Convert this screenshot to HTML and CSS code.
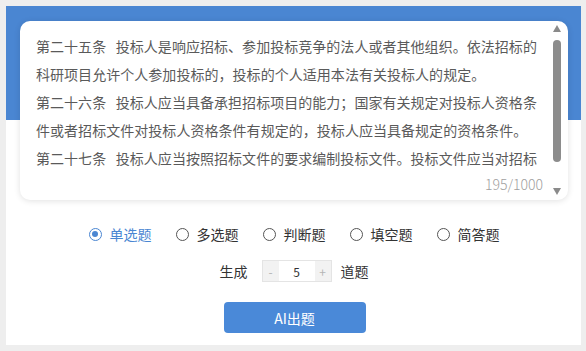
FILE: index.html
```html
<!DOCTYPE html>
<html lang="zh-CN">
<head>
<meta charset="utf-8">
<link rel="stylesheet" href="styles.css">
</head>
<body>
<div class="panel">
  <div class="card">
    <div class="content">
      <div class="text">
        <div class="line">第二十五条&nbsp;&nbsp;&nbsp;投标人是响应招标、参加投标竞争的法人或者其他组织。依法招标的</div>
        <div class="line">科研项目允许个人参加投标的，投标的个人适用本法有关投标人的规定。</div>
        <div class="line">第二十六条&nbsp;&nbsp;&nbsp;投标人应当具备承担招标项目的能力；国家有关规定对投标人资格条</div>
        <div class="line">件或者招标文件对投标人资格条件有规定的，投标人应当具备规定的资格条件。</div>
        <div class="line">第二十七条&nbsp;&nbsp;&nbsp;投标人应当按照招标文件的要求编制投标文件。投标文件应当对招标</div>
      </div>
      <div class="count">195/1000</div>
    </div>
    <div class="scrollbar">
      <div class="arrow up"></div>
      <div class="track"><div class="thumb"></div></div>
      <div class="arrow down"></div>
    </div>
  </div>

  <div class="types">
    <label class="opt checked"><span class="radio"></span><span>单选题</span></label>
    <label class="opt"><span class="radio"></span><span>多选题</span></label>
    <label class="opt"><span class="radio"></span><span>判断题</span></label>
    <label class="opt"><span class="radio"></span><span>填空题</span></label>
    <label class="opt"><span class="radio"></span><span>简答题</span></label>
  </div>

  <div class="gen">
    <span class="gen-label">生成</span>
    <div class="stepper">
      <span class="step">-</span>
      <span class="num">5</span>
      <span class="step">+</span>
    </div>
    <span class="gen-unit">道题</span>
  </div>

  <div class="actions">
    <button class="btn">AI出题</button>
  </div>
</div>
</body>
</html>
```

FILE: styles.css
```css
* { box-sizing: border-box; }
html, body { margin: 0; padding: 0; }
body {
  background: #eeeeee;
  padding: 6px;
  font-family: "Noto Sans CJK SC", "Noto Sans", sans-serif;
  width: 586px;
  height: 351px;
  overflow: hidden;
}
.panel {
  width: 575px;
  height: 339px;
  background: linear-gradient(#4a86d2 0, #4a86d2 114px, #ffffff 114px);
  padding: 15px 13px 0 14px;
  display: flex;
  flex-direction: column;
}
.card {
  height: 179px;
  background: #fff;
  border-radius: 10px;
  box-shadow: 0 1px 6px rgba(0, 0, 0, 0.12);
  display: flex;
}
.content {
  flex: 1;
  padding: 11px 0 0 16px;
  display: flex;
  flex-direction: column;
}
.text {
  color: #5a5a5a;
  font-size: 14px;
  line-height: 28px;
}
.line { white-space: nowrap; letter-spacing: 0.04px; }
.count {
  align-self: flex-end;
  margin-top: 3px;
  margin-right: 7px;
  color: #a0a0a0;
  font-size: 14px;
  font-weight: 300;
  line-height: 18px;
}
.scrollbar {
  width: 14px;
  margin-right: 4px;
  padding: 4px 0 5px;
  display: flex;
  flex-direction: column;
  align-items: center;
}
.arrow {
  width: 0;
  height: 0;
  border-left: 4.5px solid transparent;
  border-right: 4.5px solid transparent;
}
.arrow.up { border-bottom: 7px solid #8a8a8a; }
.arrow.down { border-top: 7px solid #8a8a8a; margin-top: 4px; }
.track {
  flex: 1;
  width: 14px;
  display: flex;
  justify-content: center;
  padding-top: 8px;
}
.thumb {
  width: 8px;
  height: 122px;
  background: #8c8c8c;
  border-radius: 4px;
}
.types {
  margin-top: 24px;
  height: 20px;
  display: flex;
  justify-content: center;
  gap: 24px;
  font-size: 14px;
  color: #333;
}
.opt {
  display: flex;
  align-items: center;
  gap: 8px;
  line-height: 20px;
}
.radio {
  width: 13px;
  height: 13px;
  border: 1px solid #555;
  border-radius: 50%;
  display: flex;
  align-items: center;
  justify-content: center;
}
.opt.checked { color: #4a86d2; }
.opt.checked .radio { border-color: #4a86d2; }
.opt.checked .radio::after {
  content: "";
  width: 6px;
  height: 6px;
  border-radius: 50%;
  background: #4a86d2;
}
.gen {
  margin-top: 16px;
  display: flex;
  justify-content: center;
  align-items: center;
  font-size: 14px;
  color: #333;
  height: 22px;
}
.gen-label { margin-right: 14px; }
.gen-unit { margin-left: 9px; }
.stepper {
  display: flex;
  height: 22px;
  border: 1px solid #e4e4e4;
}
.step {
  width: 16px;
  background: #f2f2f2;
  color: #b5b5b5;
  font-size: 12px;
  display: flex;
  align-items: center;
  justify-content: center;
}
.num {
  width: 36px;
  background: #fff;
  color: #333;
  font-size: 12px;
  display: flex;
  align-items: center;
  justify-content: center;
}
.actions {
  margin-top: 20px;
  display: flex;
  justify-content: center;
}
.btn {
  width: 142px;
  height: 31px;
  border: none;
  border-radius: 4px;
  background: #4a89d8;
  color: #fff;
  font-family: "Noto Sans CJK SC", "Noto Sans", sans-serif;
  font-size: 14px;
  padding: 0;
  margin-left: 1px;
}
```
